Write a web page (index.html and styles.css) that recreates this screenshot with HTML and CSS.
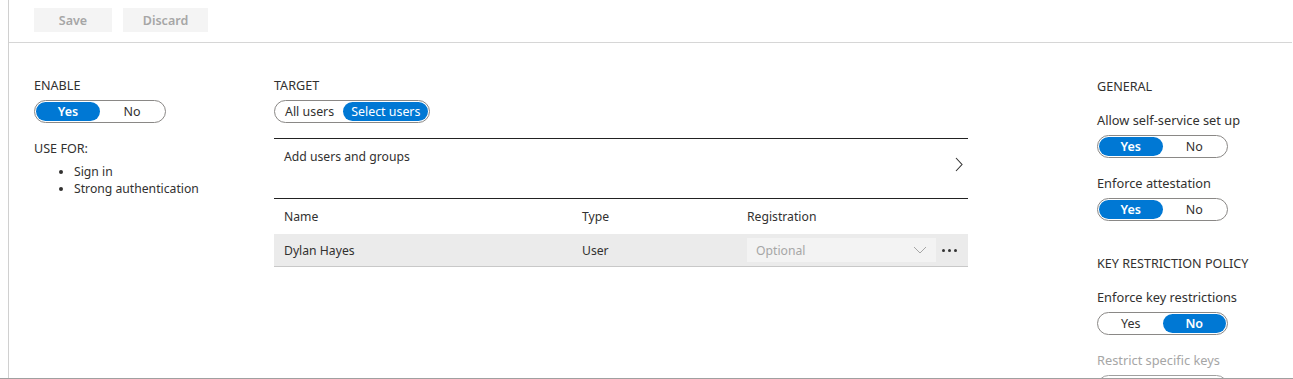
FILE: index.html
```html
<!DOCTYPE html>
<html lang="en">
<head>
    <meta charset="UTF-8">
    <meta name="viewport" content="width=device-width, initial-scale=1.0">
    <title>FIDO2 Security Key settings</title>
    <link rel="stylesheet" href="styles.css">
</head>
<body>
    <div class="page">
        <div class="blade">
            <div class="command-bar">
                <button class="cmd-btn" disabled>Save</button>
                <button class="cmd-btn cmd-wide" disabled>Discard</button>
            </div>

            <div class="content">
                <!-- enable column -->
                <div class="col col-enable">
                    <div class="section-title">ENABLE</div>
                    <div class="toggle">
                        <span class="opt active">Yes</span>
                        <span class="opt">No</span>
                    </div>
                    <div class="section-title use-for">USE FOR:</div>
                    <ul class="use-list">
                        <li>Sign in</li>
                        <li>Strong authentication</li>
                    </ul>
                </div>

                <!-- target column -->
                <div class="col col-target">
                    <div class="section-title">TARGET</div>
                    <div class="toggle toggle-auto">
                        <span class="opt">All users</span>
                        <span class="opt active">Select users</span>
                    </div>

                    <div class="add-row">
                        <span>Add users and groups</span>
                        <svg class="chevron" width="8" height="15" viewBox="0 0 8 15">
                            <path d="M1 1 L7 7.5 L1 14" fill="none" stroke="#333" stroke-width="1.1"/>
                        </svg>
                    </div>

                    <div class="table">
                        <div class="t-row t-head">
                            <div class="cell">Name</div>
                            <div class="cell">Type</div>
                            <div class="cell">Registration</div>
                        </div>
                        <div class="t-row t-item">
                            <div class="cell">Dylan Hayes</div>
                            <div class="cell">User</div>
                            <div class="cell cell-reg">
                                <div class="dropdown">
                                    <span>Optional</span>
                                    <svg width="14" height="8" viewBox="0 0 14 8">
                                        <path d="M1 1 L7 7 L13 1" fill="none" stroke="#a6a6a6" stroke-width="1"/>
                                    </svg>
                                </div>
                                <div class="more">
                                    <i></i><i></i><i></i>
                                </div>
                            </div>
                        </div>
                    </div>
                </div>

                <!-- settings column -->
                <div class="col col-general">
                    <div class="section-title">GENERAL</div>
                    <div class="field-label">Allow self-service set up</div>
                    <div class="toggle">
                        <span class="opt active">Yes</span>
                        <span class="opt">No</span>
                    </div>
                    <div class="field-label">Enforce attestation</div>
                    <div class="toggle">
                        <span class="opt active">Yes</span>
                        <span class="opt">No</span>
                    </div>

                    <div class="section-title key-title">KEY RESTRICTION POLICY</div>
                    <div class="field-label">Enforce key restrictions</div>
                    <div class="toggle">
                        <span class="opt">Yes</span>
                        <span class="opt active">No</span>
                    </div>
                    <div class="field-label disabled">Restrict specific keys</div>
                    <div class="toggle toggle-disabled"></div>
                </div>
            </div>
        </div>
    </div>
</body>
</html>
```

FILE: styles.css
```css
* {
    box-sizing: border-box;
}
html, body {
    margin: 0;
    padding: 0;
}
body {
    font-family: "Segoe UI", "Noto Sans", sans-serif;
    font-size: 12.2px;
    color: #323130;
    background: #fff;
}
.page {
    height: 379px;
    overflow: hidden;
    border-bottom: 1px solid #a0a0a0;
}
.blade {
    margin-left: 8px;
    margin-right: 1px;
    height: 100%;
    border-left: 1px solid #d0d0d0;
}
.command-bar {
    height: 43px;
    border-bottom: 1px solid #d6d6d6;
    padding: 8px 0 0 25px;
    display: flex;
    gap: 11px;
}
.cmd-btn {
    width: 78px;
    height: 24px;
    border: none;
    background: #f4f4f4;
    color: #a6a6a6;
    font-family: inherit;
    font-size: 12.5px;
    font-weight: 600;
    padding: 0;
}
.cmd-wide {
    width: 85px;
}
.content {
    display: grid;
    grid-template-columns: 240px 694px 1fr;
    padding: 34px 0 0 25px;
}
.section-title {
    font-size: 12.6px;
    line-height: 17px;
    text-transform: uppercase;
}
.col-general .section-title {
    margin-top: 1px;
}
.toggle {
    display: inline-flex;
    width: 132px;
    height: 23px;
    padding: 1px;
    border: 1px solid #8a8886;
    border-radius: 12px;
    margin-top: 6px;
}
.toggle .opt {
    flex: 1;
    display: flex;
    align-items: center;
    justify-content: center;
    border-radius: 10px;
    line-height: 19px;
    font-size: 12.5px;
}
.toggle .opt.active {
    background: #0078d4;
    color: #fff;
    font-weight: 600;
}
.toggle-auto {
    width: auto;
}
.toggle-auto .opt {
    flex: none;
    padding: 0 8px;
    font-size: 12.4px;
}
.toggle-auto .opt:first-child {
    padding-left: 9px;
    padding-right: 9px;
}
.toggle-auto .opt.active {
    font-weight: 400;
}
.toggle-disabled {
    border-color: #a0a0a0;
}
.use-for {
    margin-top: 17px;
    text-transform: none;
}
.use-list {
    margin: 6px 0 0;
    padding-left: 40px;
    line-height: 17px;
}
.add-row {
    margin-top: 15px;
    border-top: 1px solid #222;
    border-bottom: 1px solid #222;
    height: 61px;
    padding: 9px 5px 0 10px;
    display: flex;
    justify-content: space-between;
}
.chevron {
    margin-top: 9px;
}
.t-row {
    display: grid;
    grid-template-columns: 298px 165px 1fr;
    align-items: center;
}
.t-head {
    height: 35px;
}
.t-item {
    height: 33px;
    background: #ebebeb;
    border-bottom: 1px solid #c8c8c8;
}
.cell {
    padding-left: 10px;
}
.cell-reg {
    display: flex;
    align-items: center;
}
.dropdown {
    width: 189px;
    height: 24px;
    background: #f3f3f3;
    color: #a6a6a6;
    display: flex;
    align-items: center;
    justify-content: space-between;
    padding: 0 9px 0 9px;
}
.more {
    display: flex;
    gap: 3px;
    margin-left: 6px;
}
.more i {
    width: 3px;
    height: 3px;
    border-radius: 50%;
    background: #333;
}
.col-general {
    padding-left: 129px;
}
.field-label {
    margin-top: 17px;
    font-size: 12.8px;
    line-height: 17px;
}
.col-general .toggle {
    width: 131px;
}
.key-title {
    margin-top: 34px !important;
}
.disabled {
    color: #a6a6a6;
    margin-top: 17px;
}
```
